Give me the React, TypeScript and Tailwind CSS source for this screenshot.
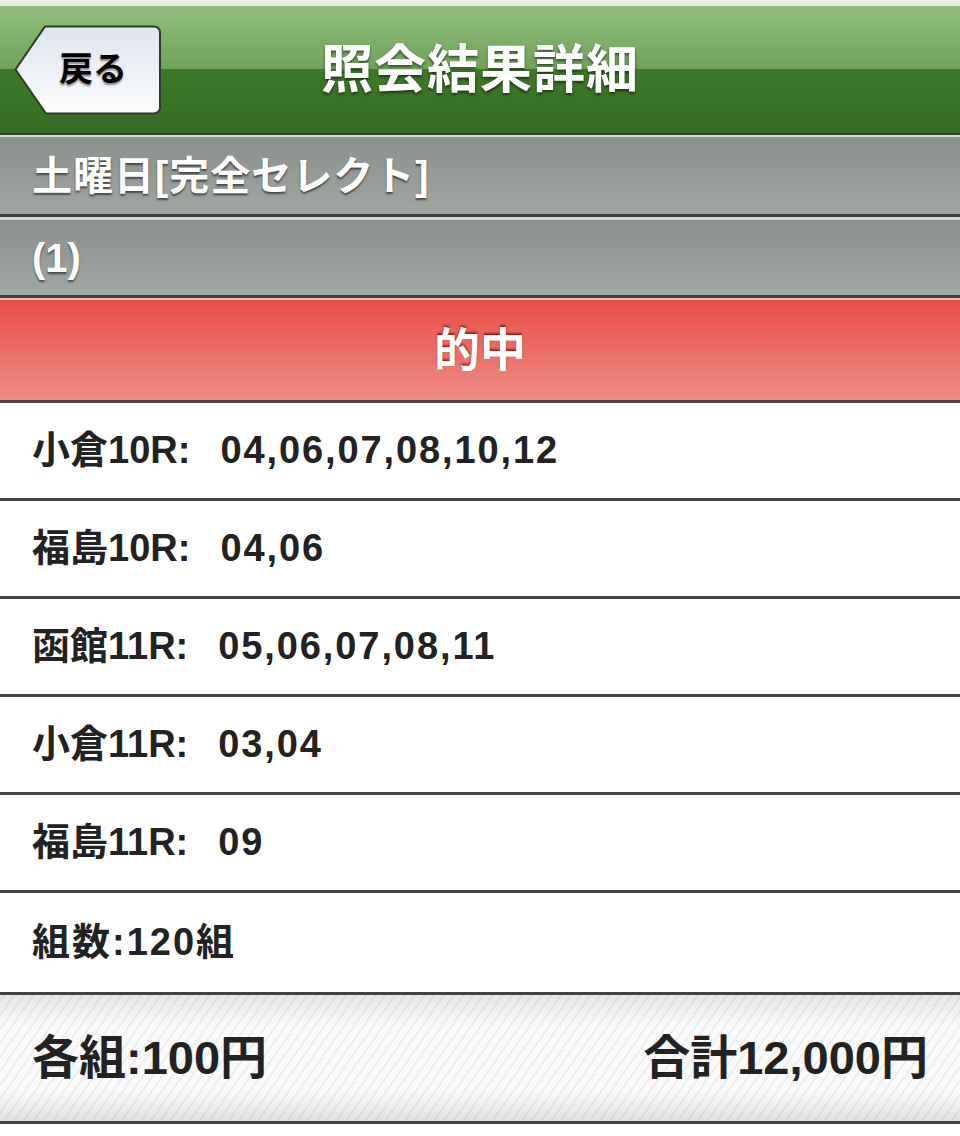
const rows = [
  ['小倉10R:', '04,06,07,08,10,12'],
  ['福島10R:', '04,06'],
  ['函館11R:', '05,06,07,08,11'],
  ['小倉11R:', '03,04'],
  ['福島11R:', '09'],
];

const font = "font-['Liberation_Sans','Noto_Sans_CJK_JP',sans-serif]";

// back button with arrow-shaped left edge
const BackButton = () => (
  <button className="relative w-[148px] h-[90px] ml-[14px] shrink-0 flex items-center">
    <svg className="absolute inset-0" width="148" height="90" viewBox="0 0 148 90">
      <defs>
        <linearGradient id="bk" x1="0" y1="0" x2="0" y2="1">
          <stop offset="0" stopColor="#dfe5ee" />
          <stop offset="1" stopColor="#fbfcfd" />
        </linearGradient>
      </defs>
      <path
        d="M31 1.5 H140 a6 6 0 0 1 6 6 V82.5 a6 6 0 0 1 -6 6 H32 L1.5 44.5 Z"
        fill="url(#bk)"
        stroke="#2f3a2c"
        strokeWidth="2"
      />
    </svg>
    <span className="relative block pl-[45px] text-[34px] font-bold text-black [text-shadow:0_2px_2px_rgba(0,0,0,0.45)]">
      戻る
    </span>
  </button>
);

export default function App() {
  return (
    <div className={`w-[960px] min-h-[1136px] bg-white ${font}`}>
      <div className="h-[6px] bg-[#e9f0e3]" />
      <header className="relative h-[127px] flex items-center bg-[linear-gradient(to_bottom,#92be7d_0%,#6fa35a_50%,#3d7a28_50%,#356d22_100%)]">
        <BackButton />
        <h1 className="absolute left-0 right-0 text-center text-[52px] tracking-[1px] font-bold text-white pointer-events-none [text-shadow:0_2px_3px_rgba(0,0,0,0.55)]">
          照会結果詳細
        </h1>
      </header>
      <div className="h-[2px] bg-[#33402f]" />
      <div className="h-[2px] bg-[#d6dad6]" />

      <div className="h-[77px] flex items-center px-8 bg-[linear-gradient(to_bottom,#8a8f8b,#a0a6a2)]">
        <span className="text-[40px] tracking-[1px] font-bold text-white [text-shadow:0_2px_2px_rgba(0,0,0,0.55)]">
          土曜日[完全セレクト]
        </span>
      </div>
      <div className="h-[3px] bg-[#3b4140]" />
      <div className="h-[3px] bg-[#d3d7d3]" />

      <div className="h-[75px] flex items-center px-8 bg-[linear-gradient(to_bottom,#8a8f8b,#a0a6a2)]">
        <span className="text-[40px] font-bold text-white [text-shadow:0_2px_2px_rgba(0,0,0,0.55)]">(1)</span>
      </div>
      <div className="h-[3px] bg-[#3f3f44]" />
      <div className="h-[2px] bg-[#f6b3ad]" />

      <div className="h-[100px] flex items-center justify-center bg-[linear-gradient(to_bottom,#e94e48,#ee8c86)]">
        <span className="text-[46px] font-bold text-white [text-shadow:0_-2px_2px_rgba(110,10,10,0.7)]">的中</span>
      </div>

      {rows.map(([label, nums]) => (
        <div key={label} className="h-[98px] border-t-[3px] border-[#444] flex items-center px-8">
          <span className="text-[38px] font-bold text-[#222]">
            {label}
            <span className="ml-[30px] tracking-[1.9px]">{nums}</span>
          </span>
        </div>
      ))}
      <div className="h-[102px] border-t-[3px] border-[#444] flex items-center px-8">
        <span className="text-[38px] tracking-[2px] font-bold text-[#222]">組数:120組</span>
      </div>

      <footer className="h-[132px] border-y-[3px] border-[#444] relative bg-[linear-gradient(to_bottom,#e6e6e6,#fafafa_25%,#fafafa_75%,#e2e2e2)]">
        <div className="absolute inset-0 bg-[repeating-linear-gradient(-55deg,transparent_0px,transparent_6px,rgba(0,0,0,0.05)_6px,rgba(0,0,0,0.05)_8px)]" />
        <div className="relative h-full flex items-center justify-between px-8">
          <span className="text-[47px] font-bold text-[#222]">各組:100円</span>
          <span className="text-[47px] font-bold text-[#222]">合計12,000円</span>
        </div>
      </footer>
    </div>
  );
}
